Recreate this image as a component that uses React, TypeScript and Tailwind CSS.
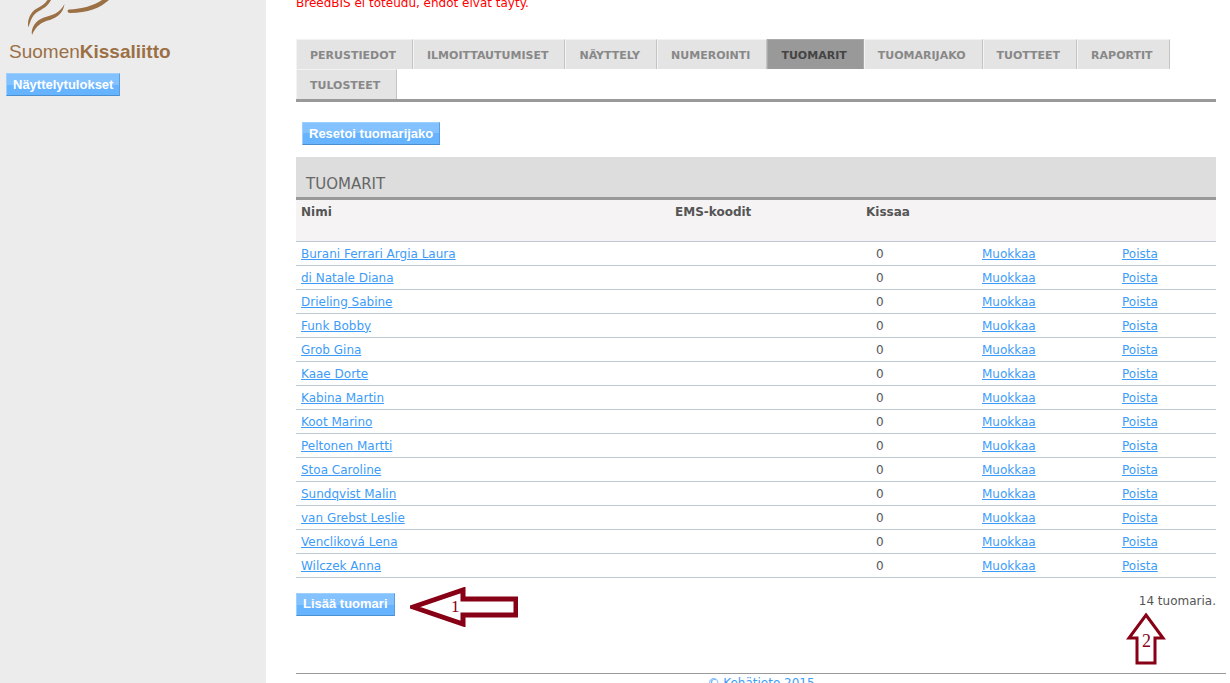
interface Tab {
    label: string;
    active?: boolean;
}

const tabs: Tab[] = [
    { label: "PERUSTIEDOT" },
    { label: "ILMOITTAUTUMISET" },
    { label: "NÄYTTELY" },
    { label: "NUMEROINTI" },
    { label: "TUOMARIT", active: true },
    { label: "TUOMARIJAKO" },
    { label: "TUOTTEET" },
    { label: "RAPORTIT" },
    { label: "TULOSTEET" },
];

const judges = [
    "Burani Ferrari Argia Laura",
    "di Natale Diana",
    "Drieling Sabine",
    "Funk Bobby",
    "Grob Gina",
    "Kaae Dorte",
    "Kabina Martin",
    "Koot Marino",
    "Peltonen Martti",
    "Stoa Caroline",
    "Sundqvist Malin",
    "van Grebst Leslie",
    "Vencliková Lena",
    "Wilczek Anna",
];

function BlueButton({ children }: { children: React.ReactNode }) {
    return (
        <button
            type="button"
            className="h-[23px] px-1.5 border border-t-[#9fd0fb] border-l-[#9fd0fb] border-r-[#5a9fdd] border-b-[#4a90d0] bg-linear-to-b from-[#84c2ff] from-50% to-[#66b3ff] to-50% font-['Liberation_Sans',Arial,sans-serif] text-[13px] leading-5 font-bold text-white whitespace-nowrap"
        >
            {children}
        </button>
    );
}

function Logo() {
    return (
        <div className="text-[#9b7045]">
            <svg viewBox="0 0 180 40" className="block w-[180px] h-10" fill="currentColor" aria-hidden="true">
                <path d="M51 0C48 6 44 8 39 11C33 14 31 19 28.500 27.500C26.500 20 31 12 36 9C41 6 45 4 47.500 0Z" />
                <path d="M64.500 4C63 13 58 17 50 20C41 22 36 26 32 35C30.500 28 36 20 44 17.500C53 15 60 13 64.500 4Z" />
                <path d="M69 9.500C82 9 94 5.500 102 0H109C100 8 88 13 70 13C67 13 67 9.500 69 9.500Z" />
            </svg>
            <div className="pl-[9px] text-[19px] leading-6 font-['Liberation_Sans',Arial,sans-serif]">
                Suomen<strong>Kissaliitto</strong>
            </div>
        </div>
    );
}

function ArrowLeft() {
    return (
        <svg viewBox="0 0 108 40" className="w-[108px] h-10" role="img" aria-label="1">
            <path d="M3 20L53 3V12H106V28H53V37Z" fill="#fff" stroke="#880015" strokeWidth="5" />
            <text x="41" y="25" fontSize="17" fill="#880015" fontFamily="Liberation Serif, serif">1</text>
        </svg>
    );
}

function ArrowUp() {
    return (
        <svg viewBox="0 0 40 54" className="w-10 h-[54px]" role="img" aria-label="2">
            <path d="M20 3L37 26H29V51H11V26H3Z" fill="#fff" stroke="#880015" strokeWidth="3" />
            <text x="16" y="35" fontSize="18" fill="#880015" fontFamily="Liberation Serif, serif">2</text>
        </svg>
    );
}

export default function App() {
    const link = "text-[#3d9cf8] underline";

    return (
        <div className="flex h-screen overflow-hidden bg-white font-['DejaVu_Sans',Verdana,sans-serif] text-xs text-[#555]">
            <aside className="w-[266px] shrink-0 bg-[#ececec]">
                <Logo />
                <div className="pl-1.5 pt-[9px]">
                    <BlueButton>Näyttelytulokset</BlueButton>
                </div>
            </aside>

            <main className="flex-1 min-w-0 pl-[30px]">
                <div className="pr-3.5">
                    <p className="-mt-[5px] h-11 leading-4 text-[#f00]">BreedBIS ei toteudu, ehdot eivät täyty.</p>

                    <nav className="flex flex-wrap border-b-3 border-[#999]">
                        {tabs.map((tab) => (
                            <a
                                key={tab.label}
                                href="#"
                                className={
                                    "h-[30px] pt-px pl-[13px] pr-4 border-t border-l border-r text-[11px] leading-[30px] font-bold " +
                                    (tab.active
                                        ? "bg-[#999] border-[#aaa] text-[#444]"
                                        : "bg-[#e4e4e4] border-t-[#f3f3f3] border-l-[#f3f3f3] border-r-[#c4c4c4] text-[#888]")
                                }
                            >
                                {tab.label}
                            </a>
                        ))}
                    </nav>

                    <div className="flex pl-1.5 pt-5 pb-3">
                        <BlueButton>Resetoi tuomarijako</BlueButton>
                    </div>

                    <h2 className="h-[43px] pl-2.5 pt-[17px] border-b-3 border-[#999] bg-[#ddd] text-[15px] leading-5 text-[#666]">TUOMARIT</h2>

                    <table className="w-full table-fixed border-collapse text-left">
                        <colgroup>
                            <col />
                            <col className="w-[191px]" />
                            <col className="w-[116px]" />
                            <col className="w-[140px]" />
                            <col className="w-[99px]" />
                        </colgroup>
                        <thead>
                            <tr className="h-[41px] border-b border-[#bcc8d2] bg-[#f5f3f4] align-top">
                                <th className="px-[5px] pt-1">Nimi</th>
                                <th className="px-[5px] pt-1">EMS-koodit</th>
                                <th className="px-[5px] pt-1">Kissaa</th>
                                <th></th>
                                <th></th>
                            </tr>
                        </thead>
                        <tbody>
                            {judges.map((name) => (
                                <tr key={name} className="h-6 border-b border-[#bcc8d2]">
                                    <td className="px-[5px] pt-px"><a href="#" className={link}>{name}</a></td>
                                    <td></td>
                                    <td className="pl-[15px] pt-px">0</td>
                                    <td className="px-[5px] pt-px"><a href="#" className={link}>Muokkaa</a></td>
                                    <td className="px-[5px] pt-px"><a href="#" className={link}>Poista</a></td>
                                </tr>
                            ))}
                        </tbody>
                    </table>

                    <div className="relative flex justify-between h-[95px] pt-[15px]">
                        <BlueButton>Lisää tuomari</BlueButton>
                        <span className="leading-4">14 tuomaria.</span>
                        <div className="absolute left-[114px] top-[9px]"><ArrowLeft /></div>
                        <div className="absolute right-[50px] top-[34px]"><ArrowUp /></div>
                    </div>
                </div>

                <footer className="mr-1 pt-px border-t border-[#999] text-center">
                    <a href="#" className={link}>© Kehätieto 2015</a>
                </footer>
            </main>
        </div>
    );
}
